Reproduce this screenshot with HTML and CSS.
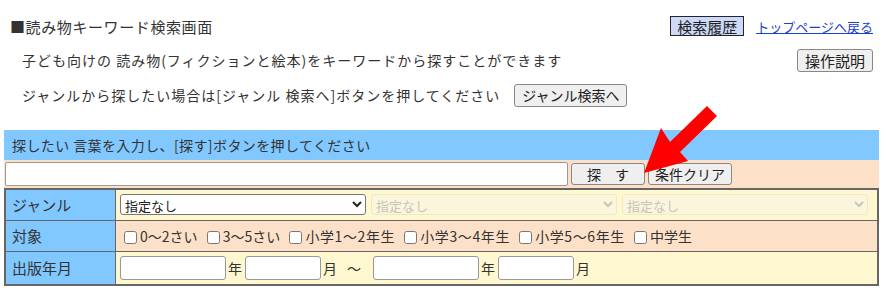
FILE: index.html
```html
<!DOCTYPE html>
<html lang="ja">
<head>
  <meta charset="UTF-8">
  <title>読み物キーワード検索画面</title>
  <link rel="stylesheet" href="styles.css">
</head>
<body>
  <div class="page">
    <div class="row row-title">
      <h1 class="title">■読み物キーワード検索画面</h1>
      <div class="head-links">
        <button type="button" class="btn btn-history">検索履歴</button>
        <a href="#" class="top-link">トップページへ戻る</a>
      </div>
    </div>
    <div class="row row-intro">
      <p>子ども向けの 読み物(フィクションと絵本)をキーワードから探すことができます</p>
      <button type="button" class="btn btn-help">操作説明</button>
    </div>
    <div class="row row-genre">
      <p>ジャンルから探したい場合は[ジャンル 検索へ]ボタンを押してください</p>
      <button type="button" class="btn btn-genre">ジャンル検索へ</button>
    </div>

    <div class="search">
      <div class="search-title">探したい 言葉を入力し、[探す]ボタンを押してください</div>
      <div class="search-row">
        <input type="text" class="keyword">
        <button type="button" class="btn btn-search">探　す</button>
        <button type="button" class="btn btn-clear">条件クリア</button>
      </div>
      <table class="cond">
        <tr class="tr-genre">
          <th>ジャンル</th>
          <td>
            <div class="selects">
              <select class="sel"><option>指定なし</option></select>
              <select class="sel" disabled><option>指定なし</option></select>
              <select class="sel" disabled><option>指定なし</option></select>
            </div>
          </td>
        </tr>
        <tr class="tr-target">
          <th>対象</th>
          <td>
            <label><input type="checkbox">0〜2さい</label>
            <label><input type="checkbox">3〜5さい</label>
            <label class="grade"><input type="checkbox">小学1〜2年生</label>
            <label class="grade"><input type="checkbox">小学3〜4年生</label>
            <label class="grade"><input type="checkbox">小学5〜6年生</label>
            <label><input type="checkbox">中学生</label>
          </td>
        </tr>
        <tr class="tr-date">
          <th>出版年月</th>
          <td>
            <div class="dates">
              <input type="text" class="year">年
              <input type="text" class="month">月
              <span class="tilde">〜</span>
              <input type="text" class="year">年
              <input type="text" class="month">月
            </div>
          </td>
        </tr>
      </table>
    </div>

    <svg class="arrow" width="90" height="72" viewBox="0 0 90 72">
      <polygon points="2,67 19,22 28,36 65,0 75,10 38,46 46,55" fill="#ff0000"/>
    </svg>
  </div>
</body>
</html>
```

FILE: styles.css
```css
body {
  margin: 0;
  font-family: "Noto Sans CJK JP", "Noto Sans", sans-serif;
  font-size: 14px;
  color: #333;
  background: #fff;
}
.page {
  position: relative;
  width: 886px;
}
.row {
  display: flex;
  align-items: center;
}
.row p {
  margin: 0;
  letter-spacing: 1px;
}
.row-title {
  height: 36px;
  margin-top: 8px;
  padding: 0 13px 0 10px;
  justify-content: space-between;
}
.title {
  margin: 0;
  font-size: 15px;
  font-weight: normal;
  letter-spacing: 0.6px;
}
.head-links {
  display: flex;
  align-items: center;
  gap: 12px;
}
.top-link {
  color: #1a3fcc;
  font-size: 13px;
}
.row-intro {
  height: 32px;
  padding: 0 13px 0 22px;
  justify-content: space-between;
}
.row-genre {
  height: 38px;
  padding-left: 22px;
  gap: 14px;
}
.btn {
  font-family: inherit;
  font-size: 15px;
  color: #222;
  background: #efefef;
  border: 1px solid #888;
  border-radius: 3px;
  height: 23px;
  padding: 0;
  line-height: 1;
  white-space: nowrap;
}
.btn-history {
  height: 20px;
  width: 74px;
  background: #cdd9f6;
  border: 1px solid #223;
  border-radius: 0;
}
.btn-help {
  width: 76px;
}
.btn-genre {
  width: 113px;
  font-size: 14px;
}
.search {
  margin: 16px 0 0 4px;
  width: 875px;
}
.search-title {
  height: 30px;
  line-height: 30px;
  padding-left: 8px;
  background: #80c8ff;
  letter-spacing: 0.4px;
}
.search-row {
  display: flex;
  align-items: center;
  height: 28px;
  background: #fce1c8;
}
.keyword {
  width: 563px;
  height: 24px;
  box-sizing: border-box;
  margin: 0 3px 0 1px;
  border: 1px solid #999;
  border-radius: 2px;
}
.btn-search {
  width: 74px;
  height: 22px;
  margin-right: 3px;
  font-size: 14px;
}
.btn-clear {
  width: 84px;
  height: 22px;
  font-size: 14px;
}
.cond {
  width: 100%;
  border-collapse: collapse;
  border: 2px solid #666;
}
.cond th,
.cond td {
  border: 1px solid #666;
  padding: 0;
  text-align: left;
  font-weight: normal;
}
.cond th {
  width: 103px;
  padding-left: 6px;
  background: #80c8ff;
  font-size: 15px;
}
.cond td {
  padding-left: 4px;
  background: #fff7d0;
}
.tr-genre { height: 31px; }
.tr-target { height: 31px; }
.tr-target td { background: #fce1c8; }
.tr-date { height: 34px; }
.selects {
  display: flex;
  gap: 5px;
}
.sel {
  width: 246px;
  height: 21px;
  font-family: inherit;
  font-size: 13px;
  color: #222;
  background: #fff;
  border: 1px solid #777;
  border-radius: 3px;
}
.sel:disabled {
  color: #b0b0b0;
  background: #faf5e2;
  border-color: #ebe3c6;
}
.tr-target label {
  margin-right: 2px;
}
.tr-target .grade {
  letter-spacing: 0.6px;
}
.tr-target input {
  width: 13px;
  height: 13px;
  margin: 0 3px 0 4px;
  vertical-align: -2px;
}
.dates {
  display: flex;
  align-items: center;
}
.dates input {
  height: 24px;
  box-sizing: border-box;
  border: 1px solid #999;
  border-radius: 3px;
  margin-right: 2px;
}
.dates .year { width: 106px; }
.dates .month { width: 76px; margin-left: 3px; }
.tilde {
  margin: 0 12px 0 10px;
}
.arrow {
  position: absolute;
  left: 642px;
  top: 98px;
}
```
